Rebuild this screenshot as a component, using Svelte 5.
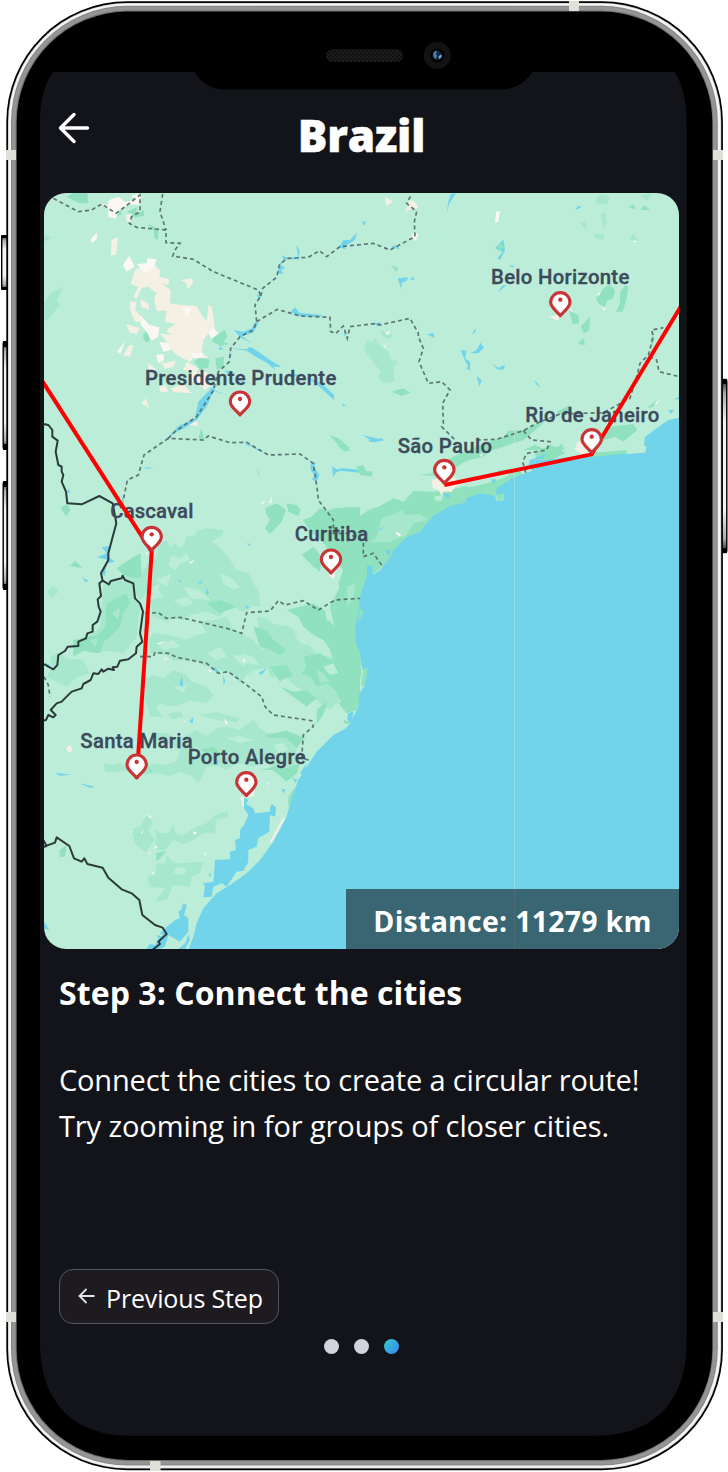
<script>
  const cities = [
    { name: 'Presidente Prudente', x: 600, y: 681, lx: 315, ly: 584, w: 574 },
    { name: 'Belo Horizonte', x: 1561, y: 383, lx: 1353, ly: 282, w: 415 },
    { name: 'Rio de Janeiro', x: 1655, y: 794, lx: 1456, ly: 697, w: 402 },
    { name: 'São Paulo', x: 1213, y: 886, lx: 1073, ly: 788, w: 283 },
    { name: 'Cascaval', x: 335, y: 1087, lx: 211, ly: 985, w: 249 },
    { name: 'Curitiba', x: 873, y: 1155, lx: 764, ly: 1053, w: 221 },
    { name: 'Santa Maria', x: 290, y: 1770, lx: 121, ly: 1674, w: 337 },
    { name: 'Porto Alegre', x: 619, y: 1823, lx: 443, ly: 1722, w: 354 }
  ];
  const routes = ['M8 575L335 1085L290 1766', 'M1922 350L1655 793L1213 885'];
  const steps = [1, 2, 3];
  const current = 3;
</script>

<div class="phone">
  <svg class="frame" viewBox="0 0 728 1472" aria-hidden="true">
    <defs>
      <linearGradient id="key" x1="0" x2="0" y1="0" y2="1">
        <stop offset="0" stop-color="#222" /><stop offset=".08" stop-color="#aaa" />
        <stop offset=".25" stop-color="#f4f4f4" /><stop offset=".75" stop-color="#f4f4f4" />
        <stop offset=".92" stop-color="#aaa" /><stop offset="1" stop-color="#222" />
      </linearGradient>
      <pattern id="mesh" width="4" height="4" patternUnits="userSpaceOnUse">
        <rect width="4" height="4" fill="#1d1d1d" />
        <circle cx="1" cy="1" r=".9" fill="#090909" /><circle cx="3" cy="3" r=".9" fill="#090909" />
      </pattern>
    </defs>
    <g fill="url(#key)" stroke="#000" stroke-width="1.4">
      <rect x="1.7" y="236" width="6" height="53" rx="1.5" />
      <rect x="3.2" y="342" width="5" height="107" rx="1.5" />
      <rect x="3.2" y="482" width="5" height="107" rx="1.5" />
      <rect x="721.8" y="379.5" width="5" height="173" rx="1.5" />
    </g>
    <g fill="#000">
      <rect x="1" y="235" width="6" height="3" rx="1" /><rect x="1" y="287" width="6" height="3" rx="1" />
      <rect x="3" y="341" width="4" height="6" rx="1" /><rect x="3" y="444" width="4" height="6" rx="1" />
      <rect x="3" y="481" width="4" height="6" rx="1" /><rect x="3" y="584" width="4" height="6" rx="1" />
      <rect x="723" y="379" width="4" height="5" rx="1" /><rect x="723" y="548" width="4" height="5" rx="1" />
    </g>
    <rect x="6.3" y="1.2" width="716.6" height="1469" rx="121" fill="#000" />
    <rect x="8" y="2.9" width="713.2" height="1465.6" rx="119.5" fill="#c9ccc8" />
    <rect x="8.7" y="3.6" width="711.8" height="1464.2" rx="118.8" fill="#f4f5f2" />
    <rect x="11" y="5.8" width="706.8" height="1459.8" rx="116.5" fill="#858686" />
    <rect x="12" y="6.8" width="704.8" height="1457.8" rx="115.5" fill="#949595" />
    <rect x="15.6" y="10.4" width="697.6" height="1450.6" rx="112" fill="#6f7070" />
    <rect x="16.7" y="11.5" width="695.6" height="1448.5" rx="111" fill="#000" />
    <g fill="#dfe1d9">
      <rect x="6" y="150" width="10" height="10" /><rect x="713" y="150" width="10" height="10" />
      <rect x="569" y="1" width="10" height="10" /><rect x="150" y="1461" width="10.5" height="10" />
      <rect x="6" y="1312" width="10" height="10" /><rect x="713" y="1312" width="10" height="10" />
    </g>
    <path
      fill="#131419"
      d="M53 72H194.5C200 79 207 89.5 225 89.5H500C518 89.5 527 80 532.5 72H674.5C682 83 686.5 99 686.5 122V1343C686.5 1400 655 1435.7 596 1435.7H130C72 1435.7 40 1400 40 1343V122C40 99 45 83 53 72Z"
    />
    <rect x="326" y="49.3" width="77" height="12.7" rx="6.3" fill="url(#mesh)" />
    <circle cx="437.3" cy="55.4" r="13.6" fill="#121212" />
    <circle cx="437.3" cy="55.4" r="6.8" fill="#010101" />
    <circle cx="437.3" cy="55.4" r="4.8" fill="#142536" />
    <path d="M433.3 53c1-2 3-2.7 3.800-2l-1 3 1 2-1.500 3c-2-1-3-3-2.300-6z" fill="#4879a6" />
    <path d="M438.500 56l3-1.500c.8 2-.5 4-2.500 4.500z" fill="#69afe7" />
  </svg>

  <main class="screen">
    <header>
      <button class="back" aria-label="Back">
        <svg viewBox="0 0 32 32"><path d="M16 2.500L2.500 16L16 29.500M3 16H29.500" /></svg>
      </button>
      <h1>Brazil</h1>
    </header>

    <section class="map">
      <svg viewBox="12 9 1905 2268" preserveAspectRatio="none">
        <rect x="0" y="0" width="1930" height="2290" fill="#bbedd9" />

        <!-- north-west -->
        <g>
          <path class="g3" d="M80 20L100 9H142L145 40L115 38ZM225 60L240 48L245 75L225 78ZM262 65L290 52L290 72L312 60V78L285 82ZM322 103L340 108L355 122L354 150L343 143L342 122ZM524 440L555 420L562 440L550 455L568 462L540 468L515 452ZM440 480L462 462L465 490ZM462 515L485 498L508 510L505 532L480 538ZM526 505L552 500L550 530L530 540ZM308 435L328 418L328 455L315 455ZM475 745L484 715L495 752ZM868 735L895 745L928 772V785L895 765Z" />
          <path class="g2" d="M12 136L36 143L12 155ZM10 340L35 308L70 290L50 330L60 345L20 392L10 380Z" />
          <path class="sand" d="M172 38L205 45L215 25L232 30L225 68L210 60ZM258 75L278 70L270 98L260 95ZM215 150L234 140L228 195L212 196ZM285 240L335 215L360 240L358 260L388 268L385 285L365 280L392 300L390 340L425 345L470 348L485 375L500 392L505 345L515 350L520 380L525 410L505 430L490 450L485 490L508 505L460 505L450 515L410 495L385 470L375 450L360 430L395 435L380 425L385 415L408 402L375 395L380 362L350 362L342 325L350 310L325 290L305 295L290 325L280 322L295 292L272 282ZM420 270L455 265L460 280L442 297L440 280ZM270 335L290 335L285 360L305 380L320 395L285 395L272 365ZM300 328L325 340L328 360L305 352ZM258 402L300 415L290 432L270 428ZM250 495L268 465L280 465L270 500ZM355 505L370 520L408 512L400 530L375 536ZM440 515L475 535L470 550L500 545L510 590L495 600L470 575L445 575L455 545L430 540ZM358 590L375 585L385 605L360 605ZM392 595L430 583L455 610L400 606ZM305 640L318 625L327 655ZM445 705L468 690L475 707ZM325 518L350 540L325 545Z" />
          <path class="snow" d="M205 32L235 20L255 35L285 30L275 15L302 12L300 45L265 42L235 65L228 85L205 82ZM152 148L172 127L170 148L155 160ZM248 225L268 197L284 230L260 245ZM290 222L320 220L322 205L350 208L338 240L315 248ZM302 380L330 405L358 412L355 440L335 453L320 425L302 405ZM230 485L255 455L242 490ZM425 350L455 355L440 378ZM358 455L385 460L392 480L370 485ZM505 430L520 412L535 430L515 446ZM455 490L490 488L490 500L460 504ZM348 495L370 492L372 510L355 520Z" />
          <path class="w" d="M385 740L415 708L465 685L475 635L515 595L532 585L520 605L500 650L470 690L440 710L405 728L380 750ZM582 420L610 425L635 415L645 395L655 400L640 428L605 438L635 460L600 442ZM570 475L620 478L630 470L655 485L690 510L724 530L700 530L708 542L680 518L650 502L620 482ZM725 195L745 205L775 200L768 165L778 180L778 208H735L722 225L735 235L722 240L732 252L712 250L720 220L732 212ZM897 172L910 150L930 150L950 128L945 150L920 165L915 178ZM752 365L765 352L778 368L845 375L840 382L775 378ZM800 560L845 580L882 615V630L840 592ZM750 550L780 556L760 560ZM585 570L635 580L600 575ZM500 590L558 615L520 602ZM537 470L552 477L538 480ZM908 640L918 648H908ZM615 757L640 770L660 780L620 765ZM650 312L664 318L658 332ZM568 485L575 492L570 505ZM912 425L920 430L914 440ZM555 540L585 548L560 550Z" />
        </g>

        <!-- north-east -->
        <g transform="translate(960 0)">
          <path class="g2" d="M705 30L725 12L750 20L740 42L715 42ZM722 75L735 65L740 95L730 118ZM700 130L733 135L730 150L708 145ZM660 100L675 95L682 122ZM808 150L820 130L832 150ZM840 15L878 12L860 32ZM12 470L25 450L35 458L45 445L55 462L65 470L90 490L88 505L115 515L100 530L103 575L70 580L55 565L62 545L40 515L20 490ZM58 420L98 435L90 447L70 440Z" />
          <path class="g3" d="M805 52L820 42L828 58ZM842 60L852 45L870 60ZM708 325L735 290L750 286L765 300L760 325L740 332L735 352L715 340ZM780 310L795 285L805 290L800 325L788 365L768 365L780 340ZM628 362L655 375L658 400L638 402ZM662 410L690 380L688 420L672 430ZM653 460L670 443L675 466ZM92 225L115 235L110 247ZM95 605L130 595L152 608L125 618ZM590 665L630 645L635 665L600 675ZM860 655L890 630L880 650ZM755 710L820 702L832 720L790 755L765 740L725 752L740 715ZM365 765L430 740L445 722L495 720L540 695L550 700L490 750L400 780H365ZM590 775L605 760L615 780ZM490 780L525 765L560 780ZM870 450L882 430L878 470ZM665 260L690 260L675 270Z" />
          <path class="sand" d="M75 20L100 35L78 48ZM135 65L145 45L150 30L165 35L175 55L155 57ZM568 380L600 372L595 393ZM655 770L660 750L672 760L680 780H655Z" />
          <path class="snow" d="M408 65L420 62L415 95L405 98ZM158 130L175 132L168 152L155 142ZM75 430L90 422L85 435ZM70 463L78 468L76 474ZM885 640L897 630L890 643ZM712 312L724 304L716 318ZM725 350L738 356L732 362ZM630 356L640 364L632 364ZM818 152L830 154L824 158Z" />
          <path class="w" d="M260 70L265 35L272 12L288 10L268 40ZM5 92L18 97L12 108ZM93 172L105 165L122 178ZM405 175L430 148L435 180L420 210L412 205L428 185ZM113 265L145 262L140 272L125 278L124 298ZM150 268L158 260L164 270ZM200 432L222 430L222 444ZM447 227L462 226L457 233ZM415 307L425 288L440 285ZM302 480L320 482L315 505L330 515V540L342 548L318 535L325 530L312 505ZM330 490L350 480L362 458L372 473L355 490ZM335 432L348 415L345 428ZM398 522L415 533L435 525L430 540L410 537ZM350 558L365 570L358 590ZM522 568L542 592L530 585ZM645 60L655 47L665 52ZM8 735L35 742L72 750L40 757ZM925 660L942 660L932 672ZM945 628L958 620L957 628ZM38 400L65 398L55 410Z" />
          <path class="g3" d="M412 165L426 158L430 175L418 184Z" />
        </g>

        <!-- centre-west -->
        <g transform="translate(0 750)">
          <path class="g2" d="M250 400L295 345L300 405L325 370L350 350L355 315L380 300L390 320L405 310L420 325L432 315L440 290L465 285L470 272L500 265L550 270L548 285L515 305L540 320L560 345L590 390L625 400L640 430L655 450L662 500L640 498L610 515L585 502L560 500L540 530L500 515L450 525L430 540L400 535L380 545L340 530L330 480L370 470L355 450L360 430L330 445L300 480L270 430ZM480 545L520 540L560 530L575 560L600 580L640 600L660 625L700 640L735 650L780 640L800 660L760 672L720 690L700 682L640 690L620 705L600 730L570 700L540 690L500 680L470 665L440 660L400 662L380 645L330 640L325 600L340 580L390 585L440 600L470 585L500 580ZM310 720L340 705L370 715L400 690L440 705L455 725L500 740L520 765L498 790L450 782L400 800L360 790L335 815L312 780ZM190 435L225 420L270 425L285 460L300 500L290 590L268 620L250 640L200 632L150 640L130 590L160 580L180 560ZM30 650L60 640L80 655L130 660L150 700L110 712L80 740L50 725L20 710L38 680ZM20 455L40 435L55 455L35 475ZM650 530L680 535L700 552L750 560L790 600L830 640L900 660V780L870 810L840 790L810 760L770 740L740 715L690 710Z" />
          <path class="g1" d="M395 345L420 355L440 340L450 360L420 372L405 390L385 375ZM540 400L570 410L600 440L580 450L550 430ZM400 480L440 470L460 490L430 500ZM500 640L540 620L560 650L530 660ZM350 610L400 600L420 620L370 630ZM600 640L640 650L660 675L620 670ZM400 740L440 735L430 760ZM540 770L600 750L640 770L600 785Z" />
          <path class="g3" d="M675 205L710 190L738 210L725 245L690 282L675 265L690 240L680 225ZM740 190L770 195L782 210L775 228L745 215ZM62 205L80 192L92 210L78 228ZM90 378L105 362L128 385ZM788 240L850 220L880 205L960 200V780L925 800L900 780L885 750L860 730L830 740L815 715L785 700L800 680L790 650L840 640L862 655L880 660L868 625L850 600L820 585L790 560L775 530L740 510L780 500L820 490L850 510L900 530L905 480L895 430L908 395L905 360L880 320L840 300L810 270ZM785 345L820 320L845 350L840 395L820 380ZM230 385L280 350L302 340L305 410L285 415L250 405ZM500 490L540 480L590 500L540 520ZM200 490L260 460L270 490L250 520L240 560L200 600L170 590L195 560ZM640 560L680 570L700 600L740 630L720 645L680 625L660 622ZM100 600L200 580L180 640L130 632L100 650ZM890 15L930 25L915 35ZM690 680L740 675L760 710L740 712L720 725ZM720 740L760 755L800 750L830 775L800 800L770 778Z" />
          <path class="g1" d="M790 460L820 440L850 460L820 480ZM850 480L895 500L890 570L872 545L860 540ZM430 440L480 450L510 480L450 475ZM575 645L630 650L610 680ZM760 580L800 590L830 620L780 610ZM345 420L395 400L380 440ZM850 680L880 670L895 700L870 705ZM915 620L935 640L925 680L905 650Z" />
          <path class="g2" d="M820 250L860 235L880 260L850 275ZM895 300L930 290L945 320L910 340ZM900 560L935 545L940 590L915 600ZM830 690L850 700L868 725L840 728ZM905 720L930 700L940 750L915 760ZM150 600L175 595L165 620ZM215 520L240 500L235 540Z" />
          <path class="snow" d="M662 188L675 182L670 192ZM692 175L695 170L694 190L688 190ZM445 370L465 358L455 370ZM350 612L378 600L360 612ZM608 655L616 660L612 670ZM315 340L325 335L318 345ZM505 688L516 694L508 698Z" />
          <path class="sand" d="M865 405L888 400L880 418ZM370 655L382 652L378 662Z" />
          <path class="w" d="M812 70L828 68L822 80L838 105L830 125L815 118L825 108L812 90ZM876 78L890 88L910 85L960 90V98L900 92L885 100L880 115ZM248 195L245 165L252 185ZM220 255L205 350L225 365L200 370L195 408L185 400L205 360L170 352L200 340L185 322L210 318L215 290ZM650 78L657 100L665 180L658 110ZM312 82L345 85L320 86ZM125 412L145 422L138 427ZM84 145L92 158L82 158ZM410 417L425 422L420 426ZM472 428L488 422L482 432ZM498 445L508 458L500 465ZM620 310L632 312L628 318ZM418 735L425 705L430 740ZM550 705L556 725L550 735ZM655 700L680 685L665 705ZM615 5L640 20L665 35L685 45L650 30ZM848 310L868 300L860 315ZM615 495L630 505H618ZM12 670L28 672L25 685ZM520 680L540 695H525Z" />
        </g>

        <!-- south-west -->
        <g transform="translate(0 1530)">
          <path class="g2" d="M192 190L215 195L240 190L262 202L290 210L340 190L372 195L410 185L420 150L380 125L330 110L355 98L380 100L400 112L430 110L470 90L500 110L530 85L560 80L600 90L640 60L660 85L680 100L740 95L800 110L770 140L760 240L700 215L680 180L640 200L590 190L560 210L535 198L500 200L475 248L450 225L420 215L390 228L350 220L300 225L268 212L230 215L195 215ZM275 390L305 375L320 345L340 370L325 390L350 425L345 385L360 400L385 400L400 372L405 400L430 405L470 380L500 370L525 345L565 332L560 352L530 358L525 400L490 400L460 420L430 432L400 420L375 450L350 450L345 420L315 455L285 430ZM322 530L345 520L350 490L375 490L380 465L400 488L420 490L490 485L480 520L455 530L450 560L400 555L380 600L345 605L375 565L330 560ZM382 40L425 35L430 50L395 58ZM480 45L530 35L600 55L590 66L530 60ZM320 10L345 22L370 50L330 50Z" />
          <path class="g3" d="M675 105L710 98L740 92L765 102L790 115L770 145L740 115L680 112ZM660 210L700 200L740 205L780 190L770 220L740 245L700 210ZM745 290L765 262L762 300L745 322ZM60 450L80 435L75 470L58 472ZM348 460L380 452L350 485ZM830 30L858 5L860 20L840 60L800 95L830 65ZM895 10L920 -10L945 -20L960 0L950 30L920 40ZM910 60L942 68L915 72ZM480 148L520 140L540 160L500 158Z" />
          <path class="g1" d="M560 115L600 108L640 120L600 130ZM440 150L470 140L490 160L455 170ZM700 135L730 130L745 150L715 160ZM410 500L440 505L430 525L400 520Z" />
          <path class="sand" d="M78 145L90 135L98 148L88 160ZM600 290L625 285L645 270L640 290L620 292L612 310L622 335L608 318ZM680 250L690 250L682 256Z" />
          <path class="snow" d="M550 55L562 65L560 75ZM303 398L310 388L306 402ZM322 345L334 348L330 354ZM458 395L473 396L462 404ZM343 440L352 437L348 448ZM492 462L500 457L495 468ZM335 520L346 513L340 524ZM430 60L438 64L432 66ZM272 392L278 396L274 400ZM326 458L334 454L330 462Z" />
          <path class="w" d="M612 292L625 300L618 312L640 325L645 340L690 335L690 325L695 312L708 322L706 350L690 345L688 395L655 415L650 440L625 450V485L610 512L590 515L560 560L545 550L520 560L515 590L490 592L495 560L490 550L520 545L525 480L570 478V455L588 450L585 420L600 415V390L612 375L625 345L612 325ZM430 610L440 615L432 645L445 655L445 695L420 725L385 705L375 740L360 747H318L330 732L345 735L355 715L350 705L372 710L360 700L380 680L410 658L420 655L415 635L425 628ZM446 703L450 720L435 747H415L435 730ZM45 218L95 224L60 227ZM118 250L165 260L150 263ZM360 128L378 115L385 135ZM448 65L460 50L458 70ZM325 200L335 215H330ZM12 665L28 690L12 685ZM505 525L512 518L512 532ZM725 268L738 268L730 280ZM525 185L538 180L532 195Z" />
        </g>

        <!-- coast and ocean -->
        <g transform="translate(960 750)">
          <path class="g3" d="M-150 235L-120 205L-80 215L-40 200L0 228L30 208L60 198L100 175L130 185L160 153L215 155L290 145L350 130L420 90L480 85L490 120L430 150L400 175L330 200L240 220L200 270L100 350L20 420L5 480L-5 600L0 640L5 700L-10 770L-30 785L-60 740V640L-90 500L-40 400L-90 340ZM180 105L215 100L240 65L265 58L290 45L360 15L400 0H430L370 50L320 62L290 80L270 110ZM525 40L570 15L600 25L615 40L580 58L530 65ZM-10 80L10 75L18 92L38 95L35 110L0 105ZM670 40L740 35L800 30V50L700 55Z" />
          <path class="g2" d="M55 270L65 235L95 225L105 220L125 210L135 225L180 222L205 240L160 250L140 285L90 305L30 308L50 290Z" />
          <path class="g1" d="M300 135L345 112L390 105L440 90L465 88L440 110L380 130L330 142ZM222 170L250 165L245 182H228Z" />
          <path class="g2" d="M-60 270L-30 260L-15 290L-45 310ZM-40 440L-15 430L-20 480L-38 500Z" />
          <path class="snow" d="M105 275L118 280L124 288L114 287ZM360 45L368 40L366 52Z" />
          <path class="sand" d="M215 120L280 105L290 122L322 125L285 140L275 155L250 155L245 167L235 150L218 145ZM645 30L652 5L672 15L695 38L670 45Z" />
          <path class="w" d="M957 -67L925 -60L890 -35L855 -10L852 15L860 22L855 38L800 42L760 44L700 50L665 46L600 55L560 60L510 60L505 80L518 92L495 100L480 105L460 112L410 145L408 168L432 160L430 182L410 182L405 168L360 160L320 175L315 188L270 198L220 228L205 245L180 275L140 292L100 330L92 350L60 390L38 405V378L22 376L20 410L10 440L-2 475L-2 500L-15 560L-12 610L0 640L2 660L8 690L22 685L20 700L12 740L-2 760L-5 800L-20 830L-30 850L-42 865L-80 885L-130 935L-160 980L-185 1020L-205 1075L-220 1130L-260 1205L-300 1260L-340 1300L-390 1335L-430 1360L-470 1405L-490 1450L-500 1490L-515 1530H960Z" />
          <path class="g3" d="M408 165L432 158L430 180L412 184ZM-2 508L11 510L8 525L-6 545ZM10 690L22 684L20 710L12 742L3 735Z" />
          <path class="w" d="M75 333L92 328L88 350ZM50 272L78 257L65 268ZM392 118L408 118L402 132ZM250 160L275 165L262 176ZM505 62L560 40L550 55ZM25 0L30 6L68 2V-5ZM-36 820L-20 815L-25 850L-38 840ZM-160 970L-180 1000L-168 1005ZM-200 1015L-188 1020L-195 1030Z" />
          <path d="M-228 1135L-268 1207" stroke="#f8f0ea" stroke-width="6" />
        </g>

        <!-- state and national borders -->
        <g class="state">
          <path d="M40 25L115 65L155 60L185 42L228 70L255 50L300 15V65L275 80L268 100L290 112L378 120V158L420 160L405 180L398 198L460 208L520 245L655 300L662 318L645 345L650 395L640 420L600 440L572 475L568 515L535 545L518 605L470 680L405 725L385 745L490 750L505 738L570 758L620 757L685 795L780 792L820 820L832 900L835 930L880 990V1030L925 1030L970 1055V1100L1000 1090L1027 1128" />
          <path d="M368 12L360 65L378 120M662 318L668 295L710 262L718 225L740 205L805 202L838 182L860 200L900 170L1000 160L1050 180L1125 140L1123 95L1130 65L1100 40L1115 12M650 395L712 358L780 378L870 382L872 425L888 430L910 408L922 445L930 410L1010 400L1020 405L1110 385L1135 430L1135 440L1150 475L1137 515L1165 580L1205 575L1230 600L1208 640L1210 700L1205 710L1245 750M1310 750L1370 748L1450 722L1490 700L1560 672L1690 668L1770 625L1790 560L1800 520L1825 495L1840 440L1835 420L1870 413M1828 500L1850 510L1857 545L1918 560M1450 722L1475 750L1530 755L1520 780L1460 790L1448 815L1458 850" />
          <path d="M385 745L312 795L295 855L262 870L250 930M315 1270L355 1268L380 1285L420 1282L560 1315L605 1330L620 1268L690 1263L715 1232L735 1245L790 1232L835 1260L885 1230L960 1225M300 1400H340L345 1388L385 1390L410 1402L500 1420L535 1450L565 1445L620 1485L665 1520L675 1550L700 1575L815 1592L820 1610L790 1635L785 1705L815 1712M12 1460L25 1485L30 1520" />
        </g>
        <g class="nation">
          <path d="M10 702L25 705L37 720V740L53 752L47 785L55 825L65 830V845L70 855L65 875L78 905L82 940L125 943L178 918L218 940L229 1000L205 1090V1110L183 1150L188 1172L207 1183L212 1173L245 1165L248 1157L255 1170L280 1180L285 1225L300 1240L309 1265L300 1330L307 1355L290 1370L288 1390L265 1408L240 1412L232 1430L218 1432L222 1440L205 1436L190 1445L185 1438L175 1452L160 1450L152 1470L130 1482L125 1495L95 1505L65 1535L50 1540L32 1560L47 1575L40 1582L25 1575L18 1590L10 1592" />
          <path d="M188 1172L178 1180L183 1218L173 1228L176 1250L182 1265L172 1295L158 1305V1325L142 1330L138 1345L115 1355V1368L83 1370L75 1383L55 1395L52 1425L40 1438L12 1422" />
          <path d="M10 1950L20 1968L12 1970L45 1958L50 1942L88 1968L102 2005L125 2015L133 2005L142 2022L188 2033L205 2063L245 2098L275 2110L298 2130L307 2175L345 2205L368 2213L380 2232L355 2255L360 2262L337 2280" />
        </g>
        <path d="M1423.500 9V2277" stroke="#d2e8ea" stroke-opacity=".42" stroke-width="3" />

        {#each cities as c (c.name)}
          <text x={c.lx} y={c.ly} textLength={c.w}>{c.name}</text>
        {/each}
        {#each routes as d (d)}
          <path class="route" {d} />
        {/each}
        {#each cities as c (c.name)}
          <g transform="translate({c.x} {c.y})">
            <path class="pin" d="M0 -6C-7 -17 -29 -29 -29 -46A29 29 0 0 1 29 -46C29 -29 7 -17 0 -6Z" />
            <circle cy="-54" r="6.500" fill="#c93436" />
          </g>
        {/each}
      </svg>
      <p class="distance">Distance: 11279 km</p>
    </section>

    <section class="copy">
      <h2>Step 3: Connect the cities</h2>
      <p class="l1">Connect the cities to create a circular route!</p>
      <p class="l2">Try zooming in for groups of closer cities.</p>
    </section>

    <button class="prev">
      <svg viewBox="0 0 18 16"><path d="M8.500 1L1.500 8L8.500 15M2 8H16.500" /></svg>
      <span>Previous Step</span>
    </button>

    <nav class="dots">
      {#each steps as s (s)}
        <i class:on={s === current}></i>
      {/each}
    </nav>
  </main>
</div>

<style>
  :global(body) {
    background: #fff;
  }
  .phone {
    position: relative;
    width: 728px;
    height: 1472px;
    overflow: hidden;
    font-family: 'Open Sans', 'Noto Sans', sans-serif;
    color: #fff;
  }
  .frame {
    position: absolute;
    inset: 0;
    width: 728px;
    height: 1472px;
  }
  .screen {
    position: relative;
    box-sizing: border-box;
    width: 728px;
    height: 1472px;
    padding: 72px 49px 0 44px;
    display: flex;
    flex-direction: column;
    align-items: flex-start;
  }
  header {
    width: 635px;
    height: 121px;
    display: grid;
    grid-template-columns: 60px 1fr 60px;
  }
  h1,
  h2,
  p {
    margin: 0;
    white-space: nowrap;
  }
  h1 {
    margin-top: 33px;
    font-size: 44px;
    line-height: 60px;
    font-weight: 800;
    text-align: center;
    letter-spacing: -0.2px;
    -webkit-text-stroke: 0.5px #fff;
  }
  .back {
    width: 32px;
    height: 32px;
    margin: 40px 0 0 14px;
    padding: 0;
    border: 0;
    background: none;
  }
  .back svg {
    display: block;
    fill: none;
    stroke: #fff;
    stroke-width: 3.4;
    stroke-linecap: round;
    stroke-linejoin: round;
  }
  .map {
    width: 635px;
    height: 756px;
    border-radius: 22px;
    overflow: hidden;
    display: grid;
  }
  .map > * {
    grid-area: 1 / 1;
  }
  .map svg {
    width: 635px;
    height: 756px;
  }
  .g1 {
    fill: #bbedd9;
  }
  .g2 {
    fill: #a6e7cd;
  }
  .g3 {
    fill: #90e1be;
  }
  .sand {
    fill: #f5f0e4;
  }
  .snow {
    fill: #fbf8f3;
  }
  .w {
    fill: #71d4ea;
  }
  .state {
    fill: none;
    stroke: #53686a;
    stroke-opacity: 0.9;
    stroke-width: 5;
    stroke-dasharray: 12 9;
  }
  .nation {
    fill: none;
    stroke: #2b3a3a;
    stroke-width: 6;
    stroke-linejoin: round;
  }
  .route {
    fill: none;
    stroke: #f00;
    stroke-width: 12;
  }
  .pin {
    fill: #fff;
    stroke: #c93436;
    stroke-width: 9.5;
    stroke-linejoin: round;
  }
  text {
    font-family: Roboto, sans-serif;
    font-size: 61px;
    font-weight: 500;
    fill: #3c4a5b;
    stroke: #3c4a5b;
    stroke-width: 1;
  }
  .distance {
    z-index: 1;
    place-self: end;
    box-sizing: border-box;
    width: 333px;
    height: 60px;
    background: rgba(14, 16, 20, 0.56);
    text-align: center;
    font-size: 28.5px;
    line-height: 64px;
    font-weight: 700;
    letter-spacing: 0.25px;
  }
  .copy {
    padding-left: 15px;
    height: 319.500px;
  }
  h2 {
    margin-top: 22px;
    font-size: 32px;
    line-height: 44px;
    font-weight: 700;
    letter-spacing: 0.07px;
  }
  .copy p {
    font-size: 29px;
    line-height: 46px;
  }
  .l1 {
    margin-top: 42px;
    letter-spacing: -0.17px;
  }
  .l2 {
    letter-spacing: -0.1px;
  }
  .prev {
    box-sizing: border-box;
    width: 220px;
    height: 55px;
    margin-left: 15px;
    padding: 0 0 0 18px;
    display: flex;
    align-items: center;
    gap: 10px;
    border: 1px solid #515766;
    border-radius: 14px;
    background: #1d1b20;
    color: #fff;
    font: 400 25px 'Open Sans', sans-serif;
    white-space: nowrap;
  }
  .prev span {
    padding-top: 3px;
    letter-spacing: -0.15px;
  }
  .prev svg {
    width: 18px;
    height: 16px;
    fill: none;
    stroke: #e4e4e6;
    stroke-width: 1.8;
  }
  .dots {
    align-self: center;
    margin-top: 15.500px;
    display: flex;
    gap: 15px;
  }
  .dots i {
    width: 15.300px;
    height: 15.300px;
    border-radius: 50%;
    background: #d1d4dd;
  }
  .dots .on {
    background: linear-gradient(135deg, #33cfc6, #3b82f6);
  }
</style>
